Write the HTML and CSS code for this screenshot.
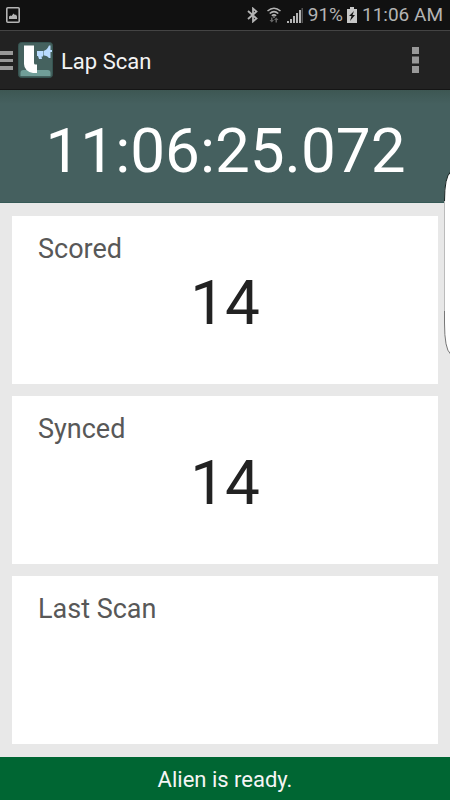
FILE: index.html
```html
<!DOCTYPE html>
<html lang="en">
<head>
<meta charset="utf-8">
<meta name="viewport" content="width=device-width, initial-scale=1">
<title>Lap Scan</title>
<link rel="stylesheet" href="styles.css">
</head>
<body>
<div class="status-bar">
  <svg class="picture" width="14" height="16" viewBox="0 0 14 16" aria-hidden="true"><rect x=".8" y=".8" width="12.400" height="14.400" rx="1" fill="none" stroke="#b4b4b4" stroke-width="1.600"/><path d="M3 12V9.500l1.500-1L5.500 9l2-2.500L9 8l1-.5 1 2V12z" fill="#b4b4b4"/></svg>
  <div class="indicators">
    <svg width="11" height="16" viewBox="0 0 11 16" aria-hidden="true"><path d="M1 4l8.500 7.500-3.500 3V1.500l3.500 3L1 12" fill="none" stroke="#b4b4b4" stroke-width="1.800"/></svg>
    <svg class="wifi" width="14" height="16" viewBox="0 0 14 16" aria-hidden="true"><g fill="none" stroke="#b4b4b4" stroke-width="1.500"><path d="M.5 4Q7-1.500 13.500 4M2.700 6.500q4.300-3.800 8.600 0M4.800 8.800q2.200-1.900 4.400 0"/></g><path d="M5.500 9.500h3L7 11z" fill="#b4b4b4"/><path d="M4 10.500h1.500V13H7l-2.200 2.500L2.500 13H4zM8.500 15.500V13H7l2.200-2.500 2.300 2.500H10v2.500z" fill="#666"/></svg>
    <svg class="signal" width="16" height="16" viewBox="0 0 16 16" aria-hidden="true"><path d="M0 14h2v2H0zM3 12h2v4H3zM6 9h2v7H6zM9 6h2v10H9zM12 3h2v13h-2z" fill="#b4b4b4"/><path d="M14.500 1H16v15h-1.500z" fill="#555"/></svg>
    <span>91%</span>
    <svg class="battery" width="10" height="16" viewBox="0 0 10 16" aria-hidden="true"><path d="M3 0h4v2h3v14H0V2h3z" fill="#c8c8c8"/><path d="M7 4L2 9h2.500L3 14l5-6H5.500z" fill="#111"/></svg>
    <time>11:06 AM</time>
  </div>
</div>
<header class="app-bar">
  <button class="nav" type="button" aria-label="Open menu">
    <svg width="13" height="20" viewBox="0 0 13 20" aria-hidden="true"><path d="M0 1h13v4H0zM0 9h13v3H0zM0 16h13v4H0z" fill="#999"/></svg>
    <svg width="35" height="36" viewBox="0 0 35 36" aria-hidden="true"><rect x=".5" y=".5" width="34" height="35" rx="3" fill="#45625f" stroke="#365451"/><path d="M2.500 34v-3q0-3 3-3h24q3 0 3 3v3z" fill="#709e98"/><path d="M6 3.500h10V21q0 1.500 1.500 1.500H19V31h-4q-4-.5-6.500-3T6 22z" fill="#fff"/><path d="M19 9h6v5.500h-1.500l.5 2.500h-3l-1-3h-1zM25.500 9q3.500-1 5.500-5.500h1.500V8h1.500v2h-1.500v6H31q-2-3-5.500-2.500z" fill="#b9dcff"/></svg>
  </button>
  <h1>Lap Scan</h1>
  <button class="more" type="button" aria-label="More options"><svg width="7" height="26" viewBox="0 0 7 26" aria-hidden="true"><path d="M0 0h7v7H0zM0 9.500h7v7H0zM0 19h7v7H0z" fill="#999"/></svg></button>
</header>
<div class="clock"><time>11:06:25.072</time></div>
<main>
  <section class="card"><h2>Scored</h2><p>14</p></section>
  <section class="card"><h2>Synced</h2><p>14</p></section>
  <section class="card"><h2>Last Scan</h2></section>
</main>
<footer>Alien is ready.</footer>
<svg class="edge" width="6" height="184" viewBox="0 0 6 184" aria-hidden="true"><path d="M7 .5Q.5 6 .5 26v126q0 26 6.500 31z" fill="#fff"/><path d="M6.500 1Q.5 6 .5 30" fill="none" stroke="#172321"/><path d="M.5 30v110" stroke="#bbb"/><path d="M.5 140v12q0 26 6 31" fill="none" stroke="#777"/></svg>
</body>
</html>
```
FILE: styles.css
```css
* { box-sizing: border-box; }
body {
  margin: 0;
  min-height: 100vh;
  display: flex;
  flex-direction: column;
  position: relative;
  background: #e8e8e8;
  font-family: Roboto, sans-serif;
}
h1, h2, p { margin: 0; font-weight: 400; }
button { border: 0; padding: 0; background: none; }
svg { display: block; flex: none; }
.status-bar {
  height: 30px;
  padding: 0 7px 0 6px;
  display: flex;
  align-items: center;
  justify-content: space-between;
  background: #111;
  color: #b4b4b4;
  font-size: 19px;
  line-height: 32px;
}
.indicators { display: flex; align-items: center; }
.wifi { margin-left: 9px; }
.signal { margin: 0 5px 0 6px; }
.battery { margin: 0 5px 0 4px; }
.app-bar {
  height: 60px;
  display: flex;
  align-items: center;
  background: #222;
  border-top: 1px solid #444;
  border-bottom: 1px solid #151515;
}
.nav { display: flex; align-items: center; gap: 5px; }
.app-bar h1 { margin-left: 8px; padding-top: 4px; color: #f3f3f3; font-size: 22px; line-height: 30px; }
.more { margin-left: auto; padding: 0 31px; }
.clock {
  height: 113px;
  padding: 4px 0 0 1px;
  background: linear-gradient(#3d5753, #45605f 14px);
  border-bottom: 1px solid #355956;
  color: #fff;
  font-size: 62px;
  line-height: 114px;
  text-align: center;
}
main {
  flex: 1;
  padding: 13px 12px;
  display: grid;
  grid-auto-rows: 1fr;
  gap: 12px;
}
.card { padding: 17px 26px; background: #fff; }
.card h2 { color: #585858; font-size: 27px; line-height: 32px; }
.card p { color: #222; font-size: 62px; line-height: 76px; text-align: center; }
footer {
  height: 43px;
  background: #006633;
  color: #f5f5f5;
  font-size: 22px;
  line-height: 46px;
  text-align: center;
}
.edge { position: absolute; right: 0; top: 171px; }
```
